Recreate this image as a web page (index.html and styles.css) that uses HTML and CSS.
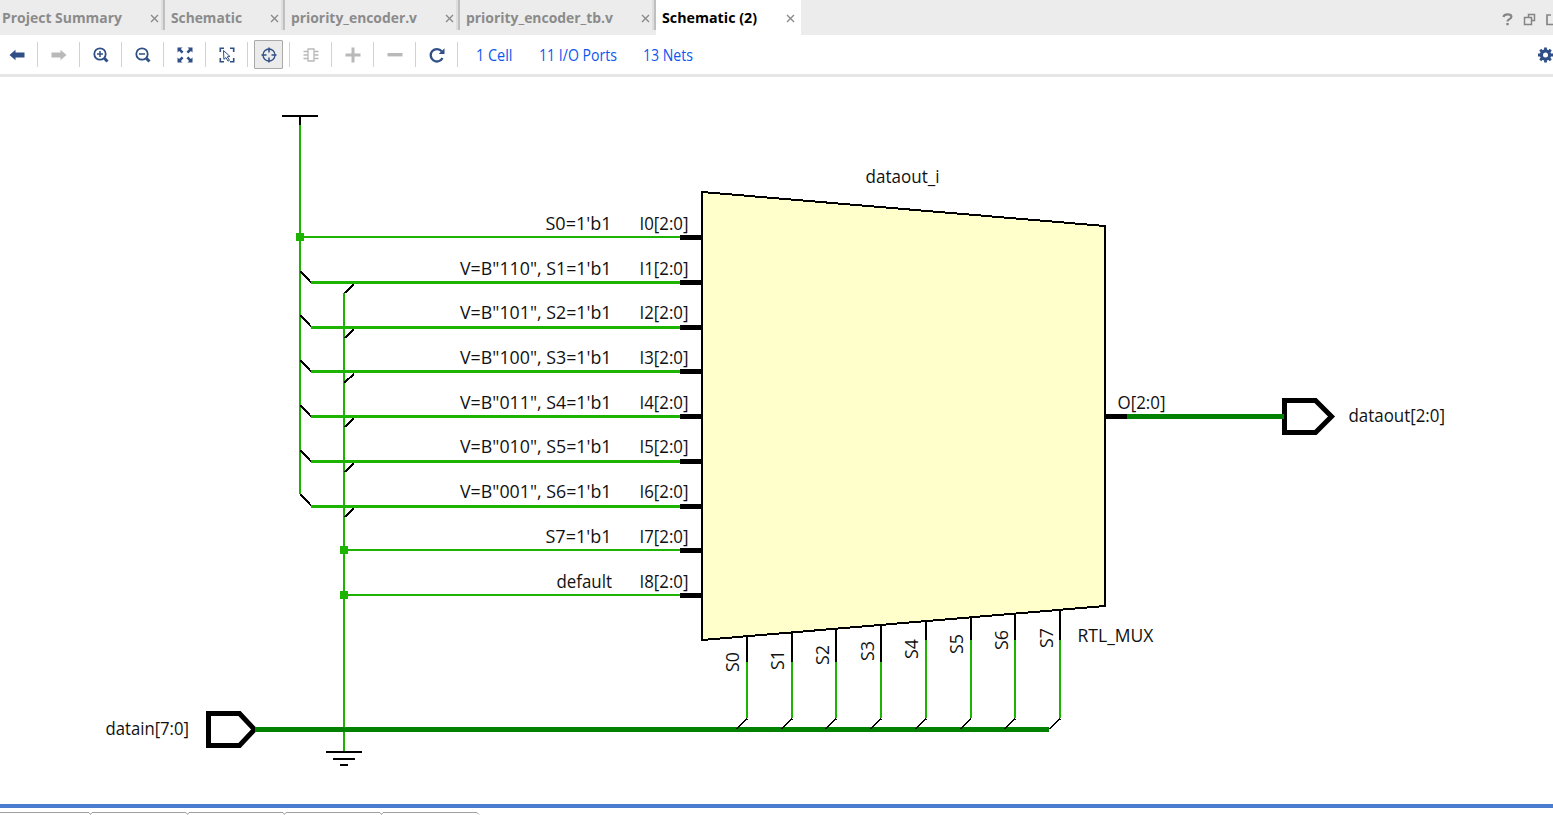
FILE: index.html
```html
<!DOCTYPE html>
<html lang="en">
<head>
<meta charset="utf-8">
<title>Schematic (2)</title>
<link rel="stylesheet" href="styles.css">
</head>
<body>
<div class="app">
  <header class="tabs">
    <div class="tab tab-summary"><svg class="tab-label" width="121" height="30"><text x="0" y="23" textLength="120" lengthAdjust="spacingAndGlyphs">Project Summary</text></svg><svg class="close" viewBox="0 0 9 9"><path d="M1 1l7 7M8 1l-7 7"/></svg></div>
    <div class="tab tab-schematic"><svg class="tab-label" width="73" height="30"><text x="0" y="23" textLength="71" lengthAdjust="spacingAndGlyphs">Schematic</text></svg><svg class="close" viewBox="0 0 9 9"><path d="M1 1l7 7M8 1l-7 7"/></svg></div>
    <div class="tab tab-encoder"><svg class="tab-label" width="128" height="30"><text x="0" y="23" textLength="126" lengthAdjust="spacingAndGlyphs">priority_encoder.v</text></svg><svg class="close" viewBox="0 0 9 9"><path d="M1 1l7 7M8 1l-7 7"/></svg></div>
    <div class="tab tab-bench"><svg class="tab-label" width="149" height="30"><text x="0" y="23" textLength="147" lengthAdjust="spacingAndGlyphs">priority_encoder_tb.v</text></svg><svg class="close" viewBox="0 0 9 9"><path d="M1 1l7 7M8 1l-7 7"/></svg></div>
    <div class="tab tab-active"><svg class="tab-label" width="97" height="30"><text x="0" y="23" textLength="95" lengthAdjust="spacingAndGlyphs">Schematic (2)</text></svg><svg class="close" viewBox="0 0 9 9"><path d="M1 1l7 7M8 1l-7 7"/></svg></div>
    <svg class="window-icons" width="53" height="35" viewBox="1500 0 53 35">
      <path d="M1503.500 17c.3-2 1.700-2.600 4-2.600 2.500 0 3.900.8 3.900 2.300 0 2.500-3.900 2.300-3.900 4.800" stroke-width="2.200"/>
      <path d="M1507.500 23v2.200" stroke-width="2.400"/>
      <path d="M1528.500 17.500v-3h6v6h-3M1524.500 17.500h7v7h-7z" stroke-width="1.500"/>
      <path d="M1551 15h-4v9.500h8" stroke-width="1.700"/>
    </svg>
  </header>

  <nav class="toolbar">
    <div class="cell"><svg class="icon" viewBox="0 0 16 16"><path class="solid" d="M.5 8L6.500 2.700V5.500h9v5h-9v2.800z"/></svg></div>
    <div class="cell off"><svg class="icon" viewBox="0 0 16 16"><path class="solid" d="M15.500 8L9.500 2.700V5.500h-9v5h9v2.800z"/></svg></div>
    <div class="cell"><svg class="icon" viewBox="0 0 16 16"><circle cx="7" cy="7" r="5.700" stroke-width="1.800"/><path d="M4 7h6M7 4v6" stroke-width="1.500"/><path d="M11.300 11.300l3.200 3.200" stroke-width="3"/></svg></div>
    <div class="cell"><svg class="icon" viewBox="0 0 16 16"><circle cx="7" cy="7" r="5.700" stroke-width="1.800"/><path d="M4 7h6" stroke-width="1.500"/><path d="M11.300 11.300l3.200 3.200" stroke-width="3"/></svg></div>
    <div class="cell"><svg class="icon" viewBox="0 0 16 16"><path class="solid" d="M.5.5h5L3.900 2.100l2.600 2.600-1.800 1.800-2.600-2.600L.5 5.500zM15.500.5v5l-1.600-1.600-2.600 2.600-1.800-1.800 2.600-2.600L10.500.5zM.5 15.500v-5l1.600 1.600 2.600-2.600 1.800 1.800-2.600 2.600 1.600 1.600zM15.500 15.500h-5l1.600-1.600-2.600-2.600 1.800-1.800 2.600 2.600 1.600-1.600z"/></svg></div>
    <div class="cell"><svg class="icon" viewBox="0 0 16 16"><path d="M1.300 5V1.300H5M11 1.300h3.700V5M1.300 11v3.700H5M11 14.700h3.700V11" stroke-width="1.600"/><path d="M4.500 3.500l6.500 6-2.700.3 2.200 3.500-1.500.9-2-3.600-2.100 1.700z" stroke-width="1"/></svg></div>
    <div class="cell"><span class="toggle"><svg class="icon" viewBox="0 0 16 16"><circle cx="8" cy="8" r="6" stroke-width="1.300"/><path d="M8 .5v5M8 10.500v5M.5 8h5M10.500 8h5" stroke-width="1.500"/></svg></span></div>
    <div class="cell off"><svg class="icon" viewBox="0 0 16 16"><path d="M5 2h6v12H5zM.5 4.500H5M.5 8H5M.5 11.500H5M11 4.500h4.500M11 8h4.500M11 11.500h4.500" stroke-width="1.300"/></svg></div>
    <div class="cell off"><svg class="icon" viewBox="0 0 16 16"><path d="M.5 8h15M8 .5v15" stroke-width="3"/></svg></div>
    <div class="cell off"><svg class="icon" viewBox="0 0 16 16"><path d="M.5 7.700h15" stroke-width="3.400"/></svg></div>
    <div class="cell"><svg class="icon" viewBox="0 0 16 16"><path d="M12.700 4.300A6.200 6.200 0 1 0 13.500 11" stroke-width="2.300"/><path class="solid" d="M15.500 1.300v5.800H9.700z"/></svg></div>
    <svg class="links" width="230" height="39" viewBox="470 35 230 39">
      <text x="476" y="61" textLength="36.500" lengthAdjust="spacingAndGlyphs">1 Cell</text>
      <text x="539" y="61" textLength="78" lengthAdjust="spacingAndGlyphs">11 I/O Ports</text>
      <text x="643" y="61" textLength="50" lengthAdjust="spacingAndGlyphs">13 Nets</text>
    </svg>
    <svg class="gear" width="15" height="16" viewBox="0 0 15 16"><circle cx="7.500" cy="8" r="4.100" stroke-width="3.200"/><path d="M7.500 .5v3M7.500 12.500v3M0 8h3M12 8h3M2.200 2.700l2 2M10.800 11.300l2 2M2.200 13.300l2-2M10.800 4.700l2-2" stroke-width="2.800"/></svg>
  </nav>

  <main class="canvas">
    <svg class="schematic" viewBox="0 77 1553 727">
      <!-- constant nets -->
      <g class="net">
        <path d="M300 125V494M300 237H680M344 293V751M344 550H680M344 595H680"/>
        <path class="bus" d="M311 282.500H680M311 327.500H680M311 371.500H680M311 416.500H680M311 461.500H680M311 506.500H680"/>
        <path d="M747 662V718M792 662V718M836 662V718M881 662V718M926 640V718M971 640V718M1015 640V718M1060 640V718"/>
      </g>
      <g class="junction"><rect x="296" y="233" width="8" height="8"/><rect x="340" y="546" width="8" height="8"/><rect x="340" y="591" width="8" height="8"/></g>

      <!-- port buses -->
      <path class="trunk" d="M255 729.500H1049"/>

      <!-- bus rippers -->
      <path class="ripper heavy" d="M300.500 271.500l10.500 11M300.500 315.500l10.500 11M300.500 360.500l10.500 11M300.500 405.500l10.500 11M300.500 450.500l10.500 11M300.500 494.500l10.500 11M344.500 293l9.500-8.500M344.500 338l9.500-8.500M344.500 382.500l9.500-8.500M344.500 427l9.500-8.500M344.500 472l9.500-8.500M344.500 517l9.500-8.500M971 718.500l-10.500 10.500"/>
      <path class="ripper" d="M747.500 718.500l-11 10.500M792.500 718.500l-11 10.500M836.500 718.500l-11 10.500M881.500 718.500l-11 10.500M926.500 718.500l-11 10.500M1015.500 718.500l-11 10.500M1060.500 718.500l-11 10.500"/>

      <!-- power and ground -->
      <path class="wire" d="M282 116H318M300 117V125M326 752H362M333 759H355M340 765H348"/>

      <!-- multiplexer -->
      <path class="pin" d="M680 237.500H702M680 282.500H702M680 327.500H702M680 371.500H702M680 416.500H702M680 461.500H702M680 506.500H702M680 550.500H702M680 595.500H702M1105 416.500H1127"/>
      <path class="wire" d="M747 636V662M792 632V662M836 628V662M881 625V662M926 621V640M971 617V640M1015 614V640M1060 610V640"/>
      <path class="mux" d="M702 192L1105 226V606L702 640Z"/>

      <!-- ports -->
      <path class="port" d="M1284.500 400.500H1315.500L1331.500 416.500L1315.500 432.500H1284.500Z"/>
      <path class="port" d="M208.500 713.500H239.500L254.500 729.500L239.500 745.500H208.500Z"/>
      <path class="trunk" d="M1127 416.500H1284M255 729.500H262"/>

      <g class="label">
        <text x="545.500" y="230" textLength="66" lengthAdjust="spacingAndGlyphs">S0=1'b1</text>
        <text x="460" y="275" textLength="151.500" lengthAdjust="spacingAndGlyphs">V=B"110", S1=1'b1</text>
        <text x="460" y="319" textLength="151.500" lengthAdjust="spacingAndGlyphs">V=B"101", S2=1'b1</text>
        <text x="460" y="364" textLength="151.500" lengthAdjust="spacingAndGlyphs">V=B"100", S3=1'b1</text>
        <text x="460" y="409" textLength="151.500" lengthAdjust="spacingAndGlyphs">V=B"011", S4=1'b1</text>
        <text x="460" y="453" textLength="151.500" lengthAdjust="spacingAndGlyphs">V=B"010", S5=1'b1</text>
        <text x="460" y="498" textLength="151.500" lengthAdjust="spacingAndGlyphs">V=B"001", S6=1'b1</text>
        <text x="545.500" y="543" textLength="66" lengthAdjust="spacingAndGlyphs">S7=1'b1</text>
        <text x="556.500" y="588" textLength="55.500" lengthAdjust="spacingAndGlyphs">default</text>

        <text x="639.500" y="230" textLength="49" lengthAdjust="spacingAndGlyphs">I0[2:0]</text>
        <text x="639.500" y="275" textLength="49" lengthAdjust="spacingAndGlyphs">I1[2:0]</text>
        <text x="639.500" y="319" textLength="49" lengthAdjust="spacingAndGlyphs">I2[2:0]</text>
        <text x="639.500" y="364" textLength="49" lengthAdjust="spacingAndGlyphs">I3[2:0]</text>
        <text x="639.500" y="409" textLength="49" lengthAdjust="spacingAndGlyphs">I4[2:0]</text>
        <text x="639.500" y="453" textLength="49" lengthAdjust="spacingAndGlyphs">I5[2:0]</text>
        <text x="639.500" y="498" textLength="49" lengthAdjust="spacingAndGlyphs">I6[2:0]</text>
        <text x="639.500" y="543" textLength="49" lengthAdjust="spacingAndGlyphs">I7[2:0]</text>
        <text x="639.500" y="588" textLength="49" lengthAdjust="spacingAndGlyphs">I8[2:0]</text>

        <text x="865.500" y="183" textLength="74" lengthAdjust="spacingAndGlyphs">dataout_i</text>
        <text x="1117.500" y="409" textLength="48" lengthAdjust="spacingAndGlyphs">O[2:0]</text>
        <text x="1348.500" y="422" textLength="96.500" lengthAdjust="spacingAndGlyphs">dataout[2:0]</text>
        <text x="105.500" y="735" textLength="83.500" lengthAdjust="spacingAndGlyphs">datain[7:0]</text>
        <text x="1077.500" y="642" textLength="76" lengthAdjust="spacingAndGlyphs">RTL_MUX</text>

        <text transform="translate(739 672) rotate(-90)" textLength="20" lengthAdjust="spacingAndGlyphs">S0</text>
        <text transform="translate(784 670) rotate(-90)" textLength="20" lengthAdjust="spacingAndGlyphs">S1</text>
        <text transform="translate(829 665) rotate(-90)" textLength="20" lengthAdjust="spacingAndGlyphs">S2</text>
        <text transform="translate(874 661) rotate(-90)" textLength="20" lengthAdjust="spacingAndGlyphs">S3</text>
        <text transform="translate(918 659) rotate(-90)" textLength="20" lengthAdjust="spacingAndGlyphs">S4</text>
        <text transform="translate(963 654) rotate(-90)" textLength="20" lengthAdjust="spacingAndGlyphs">S5</text>
        <text transform="translate(1008 650) rotate(-90)" textLength="20" lengthAdjust="spacingAndGlyphs">S6</text>
        <text transform="translate(1053 648) rotate(-90)" textLength="20" lengthAdjust="spacingAndGlyphs">S7</text>
      </g>
    </svg>
  </main>

  <footer class="dock">
    <svg width="500" height="7" viewBox="0 808 500 7"><path d="M0 812.500H89l1.500 2 1.500-2H186l1.500 2 1.500-2H283l1.500 2 1.500-2H380l1.500 2 1.500-2H477l2 2"/></svg>
  </footer>
</div>
</body>
</html>
```
FILE: styles.css
```css
* { box-sizing: border-box; }
body {
  margin: 0;
  overflow: hidden;
  background: #fff;
  font-family: "Open Sans", "Noto Sans", sans-serif;
}
svg { display: block; flex: none; fill: none; }
.app { display: flex; flex-direction: column; width: 1553px; height: 815px; }

.tabs { display: flex; height: 35px; background: #ececec; }
.tab {
  display: flex;
  justify-content: space-between;
  height: 30px;
  padding: 0 2px 0 6px;
  border-right: 2px solid #bfbfbf;
  box-shadow: inset -2px 0 #dedede;
}
.tab-summary { width: 165px; padding-left: 2px; }
.tab-schematic { width: 120px; }
.tab-encoder { width: 175px; }
.tab-bench { width: 196px; }
.tab-active {
  width: 145px;
  height: 35px;
  padding-right: 6px;
  border-right: 0;
  background: #fff;
  box-shadow: none;
}
.tab-label { overflow: visible; font-size: 14.5px; font-weight: 700; }
.tab-label text { fill: #8b8b8b; }
.tab-active .tab-label text { fill: #000; }
.close { width: 9px; height: 9px; margin: 13.5px 2.5px 0 0; stroke: #8a8a8a; stroke-width: 1.4; }
.tab-active .close { margin-right: 0.5px; }
.window-icons { margin-left: auto; stroke: #858585; }

.toolbar {
  display: flex;
  align-items: center;
  height: 42px;
  border-bottom: 3px solid #e6e6e6;
}
.cell {
  display: flex;
  align-items: center;
  justify-content: center;
  width: 42px;
  height: 25px;
  border-right: 1px solid #d2d2d2;
  color: #2f4f86;
}
.cell:first-child { margin-left: -4px; }
.off { color: #b9b9b9; }
.icon { width: 16px; height: 16px; stroke: currentColor; }
.solid { fill: currentColor; stroke: none; }
.toggle {
  display: flex;
  flex: none;
  align-items: center;
  justify-content: center;
  width: 29px;
  height: 29px;
  border: 1px solid #a9a9a9;
  border-radius: 1px;
  background: #ebebeb;
}
.links { margin-left: 12px; font-size: 15.5px; }
.links text { fill: #0b57f0; }
.gear { margin-left: auto; stroke: #2f4f86; }

.canvas { height: 727px; }
.schematic { width: 1553px; height: 727px; }
.net { stroke: #1cb400; stroke-width: 2; }
.bus { stroke-width: 3; }
.junction { fill: #1cb400; }
.trunk { stroke: #008200; stroke-width: 5; }
.ripper { stroke: #000; stroke-width: 1.5; shape-rendering: crispEdges; }
.heavy { stroke-width: 2; }
.wire { stroke: #000; stroke-width: 2; }
.pin { stroke: #000; stroke-width: 5; }
.mux { fill: #ffffcc; stroke: #000; stroke-width: 2; shape-rendering: crispEdges; }
.port { stroke: #000; stroke-width: 5; }
.label { fill: #111; font-size: 17.6px; }

.dock { height: 11px; border-top: 4px solid #4a7dcf; }
.dock svg { stroke: #a0a0a0; }
```
